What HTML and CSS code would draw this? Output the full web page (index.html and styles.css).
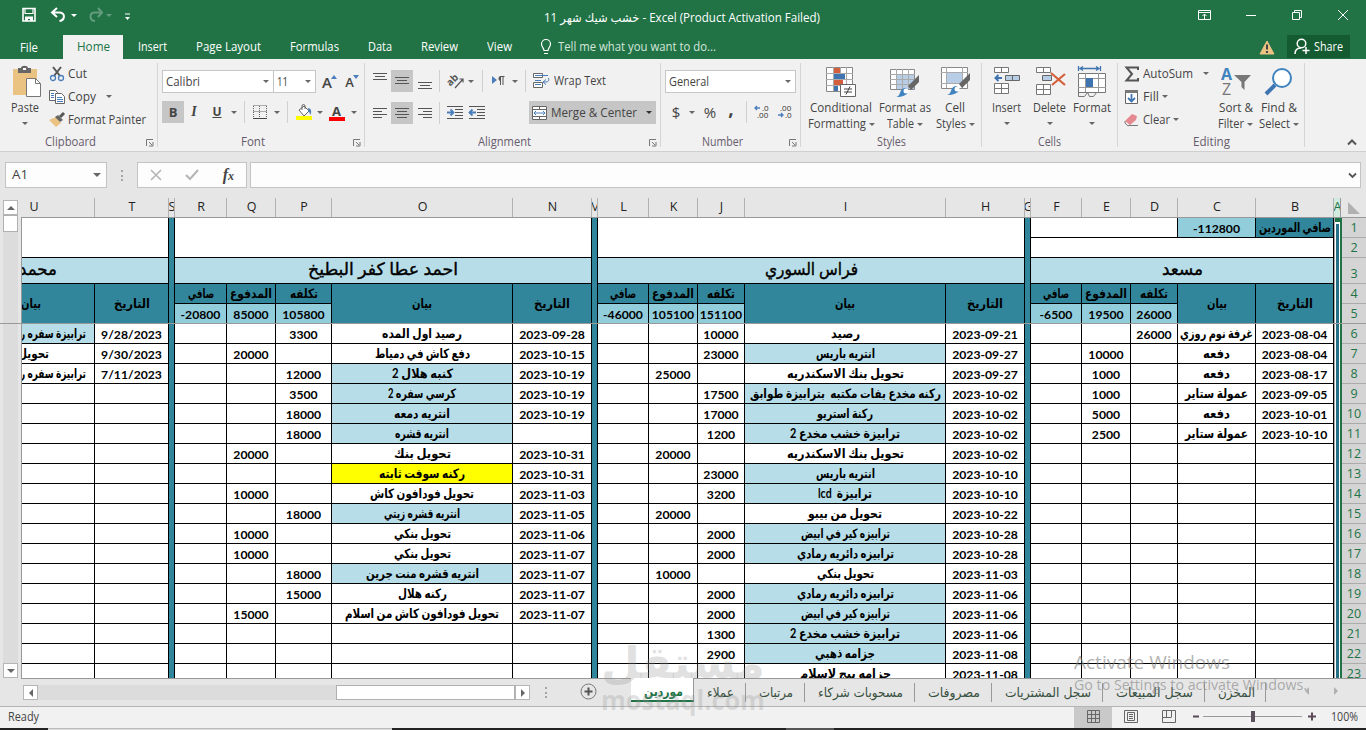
FILE: index.html
```html
<!DOCTYPE html>
<html lang="en">
<head>
<meta charset="utf-8">
<title>Excel</title>
<link rel="stylesheet" href="styles.css">
</head>
<body>
<div class="app">
  <header class="titlebar">
    <div class="qat">
      <svg width="16" height="16" viewBox="0 0 16 16"><path d="M2 1.500h12v12.500H2z" fill="none" stroke="#fff" stroke-width="1.600"/><path d="M4 1v5.500h8V1" fill="none" stroke="#fff" stroke-width="1.200"/><path d="M4 9.500h8V14H9v-2H7v2H4z" fill="#fff"/></svg>
      <svg width="18" height="16" viewBox="0 0 18 16"><path d="M7 1L2 5.500l5 4.500M2.500 5.500H9c7 0 6 7.500.500 8.500" fill="none" stroke="#fff" stroke-width="2"/></svg>
      <i class="arr w"></i>
      <svg class="dim" width="18" height="16" viewBox="0 0 18 16"><path d="M11 1l4 4.500-4 4.500M14.500 5.500H8c-6 0-6 7.500 0 8.500" fill="none" stroke="#fff" stroke-width="2"/></svg>
      <i class="arr w dim"></i>
      <svg width="7" height="8" viewBox="0 0 7 8"><path d="M1 1h5" stroke="#fff"/><path d="M1 4h5L3.500 7z" fill="#fff"/></svg>
    </div>
    <div class="doc"><span data-w="276"><bdi>خشب شيك شهر 11</bdi> - Excel (Product Activation Failed)</span></div>
    <div class="winbtns">
      <svg width="14" height="12" viewBox="0 0 14 12"><path d="M.5 1.500h12v9H.5zM.5 3.500h12M6.500 10V5M4.500 7l2-2 2 2" fill="none" stroke="#fff"/></svg>
      <svg width="12" height="12" viewBox="0 0 12 12"><path d="M1 6.500h10" stroke="#fff"/></svg>
      <svg width="12" height="12" viewBox="0 0 12 12"><path d="M1.500 3.500h7v7h-7zM3.500 3V1.500h7v7H9" fill="none" stroke="#fff"/></svg>
      <svg width="12" height="12" viewBox="0 0 12 12"><path d="M1 1l10 10M11 1L1 11" stroke="#fff"/></svg>
    </div>
  </header>
  <nav class="tabs">
    <span><b data-w="18">File</b></span><span class="on"><b data-w="33">Home</b></span><span><b data-w="29">Insert</b></span><span><b data-w="65">Page Layout</b></span><span><b data-w="49">Formulas</b></span><span><b data-w="24">Data</b></span><span><b data-w="37">Review</b></span><span><b data-w="25">View</b></span>
    <span class="tell"><svg width="12" height="16" viewBox="0 0 12 16"><path d="M4 11.500C4 9 1.500 8 1.500 5a4.500 4.500 0 0 1 9 0c0 3-2.500 4-2.500 6.500zM4 14.500h4" fill="none" stroke="#fff" stroke-width="1.200"/></svg><b data-w="158">Tell me what you want to do...</b></span>
    <svg class="warn" width="16" height="15" viewBox="0 0 16 15"><path d="M8 1l7 13H1z" fill="#eac282" stroke="#eac282" stroke-linejoin="round"/><path d="M8 4.500v5M8 11v2" stroke="#444" stroke-width="2"/></svg>
    <span class="share"><svg width="16" height="17" viewBox="0 0 16 17"><circle cx="7.500" cy="5.500" r="4.300" fill="none" stroke="#fff" stroke-width="1.500"/><path d="M1 16c0-4 2.500-6 6-6M12 9v7M8.500 12.500h7" fill="none" stroke="#fff" stroke-width="1.500"/></svg><b data-w="29">Share</b></span>
  </nav>

  <section class="ribbon">
    <div class="group clip">
      <div class="body">
        <div class="paste">
          <svg width="30" height="32" viewBox="0 0 30 32"><path d="M1 3h24v26H1z" fill="#eac282"/><path d="M6 2h3c0-3 7-3 7 0h3v5H6z" fill="#666"/><path d="M11 2h3v2h-3z" fill="#fff"/><path d="M14.500 12.500h9l5 5v13h-14z" fill="#fff" stroke="#777"/><path d="M23.500 12.500v5h5" fill="none" stroke="#777"/></svg>
          <span data-w="28">Paste</span><i class="arr"></i>
        </div>
        <div class="cliprows">
          <div><svg width="16" height="16" viewBox="0 0 16 16"><path d="M4 1l7 9M12 1L5 10" stroke="#555" stroke-width="2"/><circle cx="4" cy="12" r="2.500" fill="none" stroke="#4a7ebb" stroke-width="1.300"/><circle cx="12" cy="12" r="2.500" fill="none" stroke="#4a7ebb" stroke-width="1.300"/></svg><span data-w="19">Cut</span></div>
          <div><svg width="16" height="16" viewBox="0 0 16 16"><path d="M.5 1.500h6l2 2v8h-8z" fill="#fff" stroke="#666"/><path d="M6.500 4.500h6l3 3v7h-9z" fill="#fff" stroke="#666"/><path d="M2 4.500h3M2 6.500h3M2 8.500h3M8 8.500h5M8 10.500h6M8 12.500h6" stroke="#4a7ebb"/></svg><span data-w="28">Copy</span><i class="arr"></i></div>
          <div><svg width="16" height="16" viewBox="0 0 16 16"><path d="M0 8l7-3 5 6-5 4z" fill="#eac282"/><path d="M6 5l3-2 5 5-3 2z" fill="#666"/><path d="M11 5l4-4" stroke="#555" stroke-width="3"/></svg><span data-w="78">Format Painter</span></div>
        </div>
      </div>
      <div class="label"><span data-w="51">Clipboard</span><svg class="dl" width="8" height="8" viewBox="0 0 8 8"><path d="M.5 7V.5H7M3 3l3 3M7 3v4H3" fill="none" stroke="#777"/></svg></div>
    </div>

    <div class="group font">
      <div class="body two">
        <div class="r1"><span class="combo"><span data-w="34">Calibri</span><i class="arr"></i></span><span class="combo"><span data-w="11">11</span><i class="arr"></i></span><span class="bigA">A<svg width="6" height="4" viewBox="0 0 6 4"><path d="M0 4l3-4 3 4z" fill="#4a7ebb"/></svg></span><span class="smA">A<svg width="6" height="4" viewBox="0 0 6 4"><path d="M0 0h6L3 4z" fill="#4a7ebb"/></svg></span></div>
        <div class="r2"><b class="sel">B</b><em>I</em><u>U</u><i class="arr"></i><i class="sep"></i>
          <svg width="14" height="14" viewBox="0 0 14 14"><path d="M.5.5h13M.5 6.500h13M.5 1v12M6.500 1v12M13.500 1v12" stroke="#666" stroke-dasharray="1 1"/><path d="M0 13.500h14" stroke="#444"/></svg><i class="arr"></i><i class="sep"></i>
          <svg width="16" height="16" viewBox="0 0 16 16"><path d="M3 6l5-4 5 5-5 5z" fill="#fff" stroke="#666"/><path d="M6 6V2a1.500 1.500 0 0 1 3 0v3" fill="none" stroke="#666"/><path d="M12 4c3 0 4 3 2.500 7-1-3-2-3-2-4z" fill="#4a7ebb"/><path d="M0 12h16v4H0z" fill="#ff0"/></svg><i class="arr"></i>
          <span class="fcol">A</span><i class="arr"></i></div>
      </div>
      <div class="label"><span data-w="24">Font</span><svg class="dl" width="8" height="8" viewBox="0 0 8 8"><path d="M.5 7V.5H7M3 3l3 3M7 3v4H3" fill="none" stroke="#777"/></svg></div>
    </div>

    <div class="group align">
      <div class="body two">
        <div class="r1">
          <svg width="14" height="20" viewBox="0 0 14 20"><path d="M0 2.500h14M2 5.500h10M0 8.500h14" stroke="#555"/></svg>
          <span class="sel"><svg width="14" height="20" viewBox="0 0 14 20"><path d="M0 6.500h14M2 9.500h10M0 12.500h14" stroke="#555"/></svg></span>
          <svg width="14" height="20" viewBox="0 0 14 20"><path d="M0 11.500h14M2 14.500h10M0 17.500h14" stroke="#555"/></svg><i class="sep"></i>
          <svg width="18" height="16" viewBox="0 0 18 16"><text x="-1" y="10" transform="rotate(-45 5 8)" class="abtxt">ab</text><path d="M7 15L15 6M11.500 6H15v3.500" fill="none" stroke="#555" stroke-width="1.200"/></svg><i class="arr"></i><i class="sep"></i>
          <svg width="13" height="10" viewBox="0 0 13 10"><path d="M0 0l5 4-5 4z" fill="#4a7ebb"/><path d="M8.500 9V1M11 9V1M12.500.5H8" fill="none" stroke="#555"/><path d="M9 0a2.500 2.500 0 0 0 0 5z" fill="#555"/></svg><i class="arr"></i><i class="sep"></i>
          <svg width="17" height="16" viewBox="0 0 17 16"><path d="M.5.5h9v4h-9zM.5 9.500h9v5h-9z" fill="#fff" stroke="#666"/><path d="M2 2.500h13M2 7.500h6M2 11.500h6M15.500 5c1 4-1 4-5 4M13 6.500L10 9l3 2.500" fill="none" stroke="#4a7ebb"/></svg>
          <span class="t"><span data-w="52">Wrap Text</span></span>
        </div>
        <div class="r2">
          <svg width="14" height="12" viewBox="0 0 14 12"><path d="M0 1.500h14M0 4.500h9M0 7.500h14M0 10.500h9" stroke="#555"/></svg>
          <span class="sel"><svg width="14" height="12" viewBox="0 0 14 12"><path d="M0 1.500h14M2 4.500h10M0 7.500h14M2 10.500h10" stroke="#555"/></svg></span>
          <svg width="14" height="12" viewBox="0 0 14 12"><path d="M0 1.500h14M5 4.500h9M0 7.500h14M5 10.500h9" stroke="#555"/></svg><i class="sep"></i>
          <svg width="16" height="13" viewBox="0 0 16 13"><path d="M0 .5h16M8 3.500h8M8 6.500h8M8 9.500h8M0 12.500h16" stroke="#555"/><path d="M0 6.500h6M3.500 3.500l3 3-3 3" fill="none" stroke="#4a7ebb" stroke-width="1.800"/></svg>
          <svg width="16" height="13" viewBox="0 0 16 13"><path d="M0 .5h16M8 3.500h8M8 6.500h8M8 9.500h8M0 12.500h16" stroke="#555"/><path d="M1 6.500h6M3.500 3.500l-3 3 3 3" fill="none" stroke="#4a7ebb" stroke-width="1.800"/></svg>
          <span class="merge"><svg width="15" height="14" viewBox="0 0 15 14"><path d="M.5.5h14v13H.5zM.5 3.500h14M.5 10.500h14M7.500 0v3.500M7.500 10.500V14" fill="#fff" stroke="#666"/><path d="M2 7h11M4 5L2 7l2 2M11 5l2 2-2 2" fill="none" stroke="#4a7ebb"/></svg><span data-w="86">Merge &amp; Center</span><i class="arr"></i></span>
        </div>
      </div>
      <div class="label"><span data-w="53">Alignment</span><svg class="dl" width="8" height="8" viewBox="0 0 8 8"><path d="M.5 7V.5H7M3 3l3 3M7 3v4H3" fill="none" stroke="#777"/></svg></div>
    </div>

    <div class="group number">
      <div class="body two">
        <div class="r1"><span class="combo"><span data-w="40">General</span><i class="arr"></i></span></div>
        <div class="r2"><span class="sym">$</span><i class="arr"></i><span class="sym">%</span><span class="comma">,</span><i class="sep"></i>
          <svg width="16" height="16" viewBox="0 0 16 16"><text x="8" y="7" class="dec">.0</text><text x="3" y="14" class="dec">.00</text><path d="M1 4h5M3 2L1 4l2 2" fill="none" stroke="#4a7ebb" stroke-width="1.300"/></svg>
          <svg width="16" height="16" viewBox="0 0 16 16"><text x="3" y="7" class="dec">.00</text><text x="8" y="14" class="dec">.0</text><path d="M1 11h5M4 9l2 2-2 2" fill="none" stroke="#4a7ebb" stroke-width="1.300"/></svg></div>
      </div>
      <div class="label"><span data-w="41">Number</span><svg class="dl" width="8" height="8" viewBox="0 0 8 8"><path d="M.5 7V.5H7M3 3l3 3M7 3v4H3" fill="none" stroke="#777"/></svg></div>
    </div>

    <div class="group styles">
      <div class="body bigs">
        <div class="big"><svg width="32" height="32" viewBox="0 0 32 32"><path d="M1.500 1.500h26v24h-26z" fill="#fff" stroke="#888"/><path d="M8.500 1v24M15.500 1v24M21.500 1v24M1 7.500h27M1 13.500h27M1 19.500h27" stroke="#aaa"/><path d="M9 2h6v5H9zM9 14h9v5H9z" fill="#d35f3c"/><path d="M9 8h11v5H9zM9 20h4v5H9z" fill="#3f74b1"/><path d="M15.500 18.500h15v12h-15z" fill="#fff" stroke="#666"/><path d="M19 23h8M19 26h8M25 20.500l-4 8" stroke="#444"/></svg><span data-w="62">Conditional</span><div><span data-w="58">Formatting</span><i class="arr"></i></div></div>
        <div class="big"><svg width="32" height="32" viewBox="0 0 32 32"><path d="M1.500 3.500h24v20h-24z" fill="#fff" stroke="#888"/><path d="M8 9h17v14H8z" fill="#b8cde6"/><path d="M7.500 3v20M13.500 3v20M19.500 3v20M1 8.500h25M1 13.500h25M1 18.500h25" stroke="#aaa"/><path d="M19 20l11-11v7l-8 8z" fill="#666"/><path d="M7 31c5 0 3-9 9-9 5 1 5 9-9 9z" fill="#3f83bf"/><circle cx="17" cy="25" r="2.500" fill="#fff"/></svg><span data-w="52">Format as</span><div><span data-w="27">Table</span><i class="arr"></i></div></div>
        <div class="big"><svg width="32" height="32" viewBox="0 0 32 32"><path d="M2.500 1.500h26v21h-26z" fill="#fff" stroke="#888"/><path d="M7.500 1v21M23.500 1v21M2 6.500h27M2 17.500h27" stroke="#aaa"/><path d="M8 7h15v10H8z" fill="#b8cde6"/><path d="M20 18l11-11v7l-8 8z" fill="#666"/><path d="M8 29c5 0 3-9 9-9 5 1 5 9-9 9z" fill="#3f83bf"/><circle cx="18" cy="23" r="2.500" fill="#fff"/></svg><span data-w="20">Cell</span><div><span data-w="30">Styles</span><i class="arr"></i></div></div>
      </div>
      <div class="label"><span data-w="29">Styles</span></div>
    </div>

    <div class="group cells">
      <div class="body bigs">
        <div class="big"><svg width="30" height="32" viewBox="0 0 30 32"><path d="M2.500 1.500h14v5h-14zM2.500 17.500h14v10h-14zM9.500 1.500v5M9.500 17.500v10M2.500 22.500h14" fill="#fff" stroke="#777"/><path d="M13.500 9.500h14v5h-14zM20.500 9.500v5" fill="#b8cde6" stroke="#666"/><path d="M4 12h6M6.500 9L3.500 12l3 3" fill="none" stroke="#3f74b1" stroke-width="2"/></svg><span data-w="29">Insert</span><i class="arr"></i></div>
        <div class="big"><svg width="30" height="32" viewBox="0 0 30 32"><path d="M1.500 1.500h14v5h-14zM1.500 18.500h14v10h-14zM8.500 1.500v5M8.500 18.500v10M1.500 23.500h14" fill="#fff" stroke="#777"/><path d="M7.500 9.500h9v5h-9z" fill="#b8cde6" stroke="#666"/><path d="M16 7l14 12M30 8L17 19" stroke="#d35f3c" stroke-width="2.200"/></svg><span data-w="33">Delete</span><i class="arr"></i></div>
        <div class="big"><svg width="30" height="32" viewBox="0 0 30 32"><path d="M1.500 7.500h27v19h-27z" fill="#fff" stroke="#777"/><path d="M8.500 7v19M21.500 7v19M1 12.500h28M1 21.500h28" stroke="#999"/><path d="M9 12h7v9H9z" fill="#3f74b1"/><path d="M1.500 0v5M23.500 0v5M3 2.500h19M6 .5l-3 2 3 2M19 .5l3 2-3 2" fill="none" stroke="#3f74b1" stroke-width="1.300"/><path d="M1.500 26v4.500h6l3-4 2 4h4l3-4" fill="none" stroke="#777"/></svg><span data-w="38">Format</span><i class="arr"></i></div>
      </div>
      <div class="label"><span data-w="23">Cells</span></div>
    </div>

    <div class="group edit">
      <div class="body">
        <div class="editrows">
          <div><svg width="16" height="16" viewBox="0 0 16 16"><path d="M14 4V1.500H2.500L8 8l-5.500 6.500H14V12" fill="none" stroke="#555" stroke-width="2"/></svg><span data-w="50">AutoSum</span><i class="arr far"></i></div>
          <div><svg width="16" height="16" viewBox="0 0 16 16"><path d="M1.500 1.500h12v13h-12z" fill="#fff" stroke="#666"/><path d="M1 1h13v3H1z" fill="#777"/><path d="M7.500 5v7M4 9l3.500 3.500L11 9" fill="none" stroke="#3f74b1" stroke-width="1.800"/></svg><span data-w="16">Fill</span><i class="arr"></i></div>
          <div><svg width="16" height="16" viewBox="0 0 16 16"><path d="M1 9l7-7 5 2-1 4-6 5z" fill="#e68a92"/><path d="M1 9v2l3 3 2-1M5 13.500h9" fill="none" stroke="#777"/></svg><span data-w="27">Clear</span><i class="arr"></i></div>
        </div>
        <div class="big"><svg width="30" height="30" viewBox="0 0 30 30"><text x="0" y="13" class="azA">A</text><text x="1" y="28" class="azZ">Z</text><path d="M13 8h17l-6.500 7v8l-3-3v-5z" fill="#777"/></svg><span data-w="34">Sort &amp;</span><div><span data-w="26">Filter</span><i class="arr"></i></div></div>
        <div class="big"><svg width="30" height="30" viewBox="0 0 30 30"><path d="M2 27l9-9" stroke="#3f74b1" stroke-width="4"/><circle cx="18" cy="11" r="9" fill="#fff" stroke="#3f83bf" stroke-width="2"/></svg><span data-w="36">Find &amp;</span><div><span data-w="31">Select</span><i class="arr"></i></div></div>
      </div>
      <div class="label"><span data-w="37">Editing</span></div>
    </div>
    <svg class="collapse" width="10" height="7" viewBox="0 0 10 7"><path d="M1 5.500L5 1.500l4 4" fill="none" stroke="#555" stroke-width="2"/></svg>
  </section>

  <section class="fbar">
    <div class="namebox"><span data-w="16">A1</span><i class="arr wide"></i></div>
    <i class="dots"></i>
    <div class="fx">
      <svg width="12" height="12" viewBox="0 0 12 12"><path d="M1 1l10 10M11 1L1 11" stroke="#b5b5b5" stroke-width="1.600"/></svg>
      <svg width="14" height="12" viewBox="0 0 14 12"><path d="M1 6l4 4 8-9" fill="none" stroke="#b5b5b5" stroke-width="2"/></svg>
      <span>f<small>x</small></span>
    </div>
    <div class="formula"><svg width="9" height="7" viewBox="0 0 9 7"><path d="M1 1.500l3.500 3.500L8 1.500" fill="none" stroke="#555" stroke-width="1.800"/></svg></div>
  </section>

  <main class="work">
    <div class="vscroll"><span class="sb"><i class="arr up"></i></span><span class="thumb"></span><span class="track"></span><span class="sb"><i class="arr wide"></i></span></div>
    <div class="sheet">
      <div class="colhead" id="colhead"></div>
      <div class="lower"><div class="grid" id="grid"></div><div class="colA"><i></i></div><div class="rowhead" id="rowhead"></div></div>
    </div>
    <div class="freeze"></div>
  </main>

  <section class="bottom">
    <div class="hscroll"><span class="sb"><i class="arr left"></i></span><span class="track"></span><span class="thumb"></span><span class="sb"><i class="arr right"></i></span></div>
    <i class="dots"></i>
    <svg class="add" width="17" height="17" viewBox="0 0 17 17"><circle cx="8.500" cy="8.500" r="7.500" fill="none" stroke="#777"/><path d="M8.500 4.500v8M4.500 8.500h8" stroke="#555" stroke-width="2"/></svg>
    <div class="stabs"><span class="on"><b data-w="39">موردين</b></span><span><b data-w="27">عملاء</b></span><span><b data-w="34">مرتبات</b></span><span><b data-w="85">مسحوبات شركاء</b></span><span><b data-w="52">مصروفات</b></span><span><b data-w="86">سجل المشتريات</b></span><span><b data-w="77">سجل المبيعات</b></span><span><b data-w="37">المخزن</b></span></div>
    <i class="nav left"></i><i class="nav right"></i>
  </section>

  <footer class="status">
    <span class="ready"><span data-w="31">Ready</span></span>
    <span class="view on"><svg width="13" height="13" viewBox="0 0 13 13"><path d="M.5.5h12v12H.5zM4.500 0v13M8.500 0v13M0 4.500h13M0 8.500h13" fill="none" stroke="#666"/></svg></span>
    <span class="view"><svg width="14" height="13" viewBox="0 0 14 13"><path d="M.5.5h13v12H.5zM3.500 2.500h7v8h-7zM5 4.500h4M5 6.500h4M5 8.500h4" fill="none" stroke="#666"/></svg></span>
    <span class="view"><svg width="14" height="13" viewBox="0 0 14 13"><path d="M.5.5h13v12H.5zM4.500 0v7M9.500 0v7M.5 7.500h9" fill="none" stroke="#666"/></svg></span>
    <span class="zoom"><svg width="126" height="13" viewBox="0 0 126 13"><path d="M2 6.500h6M117 6.500h8M121 2.500v8" stroke="#5a4a5a" stroke-width="2"/><path d="M12 6.500h99" stroke="#999"/><path d="M60 1h4v11h-4z" fill="#5a4f5c"/></svg></span>
    <span class="pct"><span data-w="27">100%</span></span>
  </footer>
  <div class="strip"><i></i><i></i></div>

  <div class="activate"><div><span data-w="156">Activate Windows</span></div><p><span data-w="233">Go to Settings to activate Windows.</span></p></div>
  <div class="mark"><div><span data-w="164">مستقل</span></div><p><span data-w="164">mostaql.com</span></p></div>
</div>
<script src="app.js"></script>
</body>
</html>
```

FILE: styles.css
```css
* { box-sizing: border-box; }
body { margin: 0; font: 12px/16px "Open Sans", "Noto Sans", "DejaVu Sans", sans-serif; color: #444; }
b { font-weight: 400; }
svg { display: block; flex: none; overflow: visible; }
[data-w] { display: inline-block; white-space: nowrap; transform-origin: 0 50%; flex: none; }
.app { position: relative; width: 1366px; height: 730px; overflow: hidden; background: #e6e6e6; display: flex; flex-direction: column; }
.app > * { flex: none; }

.arr { display: inline-block; flex: none; width: 0; height: 0; border-style: solid; border-width: 3px 3px 0; border-color: #666 transparent transparent; }
.arr.w { border-top-color: #fff; }
.arr.wide { border-width: 4px 4px 0; }
.arr.up { border-width: 0 4px 4px; border-color: transparent transparent #666; }
.arr.left { border-width: 4px 4px 4px 0; border-color: transparent #666 transparent transparent; }
.arr.right { border-width: 4px 0 4px 4px; border-color: transparent transparent transparent #666; }
.dim { opacity: .3; }
.sep { width: 1px; height: 22px; background: #d0d0d0; }
.sel { background: #c6c6c6; }

.titlebar { height: 35px; background: #217346; color: #fff; display: grid; grid-template-columns: 364px 636px 366px; }
.qat { display: grid; grid-template-columns: 16px 18px 6px 18px 6px 7px; padding: 7px 0 0 21px; align-items: start; }
.qat > :nth-child(2) { margin-left: 13px; }
.qat > :nth-child(3) { margin: 7px 0 0 16px; }
.qat > :nth-child(4) { margin-left: 26px; }
.qat > :nth-child(5) { margin: 7px 0 0 27px; }
.qat > :nth-child(6) { margin: 6px 0 0 39px; }
.doc { text-align: center; padding-top: 10px; }
.winbtns { display: grid; grid-template-columns: 46px 46px 46px 46px; margin: 9px 0 0 182px; justify-items: center; height: 12px; }

.tabs { height: 24px; background: #217346; color: #fff; display: grid; grid-template-columns: 63px 60px 59px 93px 79px 52px 66px 54px 193px 520px 1fr; position: relative; }
.tabs > span { display: flex; align-items: center; justify-content: center; font-size: 12px; }
.tabs > span:first-child { padding: 2px 5px 0 0; }
.tabs > .on { background: #f1f1f1; color: #217346; }
.tabs > .tell { justify-content: flex-start; gap: 6px; padding-left: 14px; color: #d5e6dc; white-space: nowrap; }
.tabs > .warn { margin: 5px 0 0 540px; grid-column: 10; }
.tabs > .share { position: absolute; left: 1287px; top: 0; width: 63px; height: 23px; background: #155b32; gap: 4px; }

.ribbon { height: 93px; background: #f1f1f1; border-bottom: 1px solid #cfcfcf; display: grid; grid-template-columns: 158px 207px 296px 140px 181px 136px 187px 1fr; }
.group { display: flex; flex-direction: column; border-right: 1px solid #d5d5d5; margin: 4px 0 4px; height: 84px; position: relative; }
.body { height: 73px; display: flex; }
.label { height: 12px; display: flex; justify-content: center; align-items: center; color: #665b6b; padding: 2px 16px 0 0; position: relative; }
.styles .label, .cells .label, .edit .label { padding-right: 0; }
.dl { position: absolute; right: 3px; top: 4px; }
.collapse { align-self: end; margin: 0 0 5px 42px; }
.paste { width: 50px; display: flex; flex-direction: column; align-items: center; padding-top: 3px; }
.paste svg { margin: 0 0 2px 4px; }
.paste .arr { margin-top: 6px; }
.cliprows { display: grid; grid-template-rows: 21px 25px 21px; }
.cliprows > div, .editrows > div { display: flex; align-items: center; gap: 2px; }
.cliprows > div { margin-left: -1px; gap: 3px; }
.cliprows .arr { margin-left: 7px; }
.two { flex-direction: column; padding: 7px 0 0 4px; gap: 9px; }
.r1, .r2 { height: 22px; display: grid; place-items: center; align-items: center; }
.font .r1 { grid-template-columns: 112px 42px 27px 18px; }
.font .r2 { grid-template-columns: 22px 20px 26px 7px 15px 16px 17px 5px 27px 5px 29px 6px; font-size: 14px; }
.font .sel, .align .sel { width: 22px; height: 22px; display: flex; align-items: center; justify-content: center; font-weight: 700; font-size: 13px; }
.font em { font-family: "Liberation Serif", serif; font-weight: 700; font-size: 14px; }
.font u { font-weight: 700; font-size: 12px; }
.combo { width: 100%; height: 23px; background: #fff; border: 1px solid #c6c6c6; display: flex; align-items: center; justify-content: space-between; padding: 0 4px 0 3px; }
.font .combo + .combo { border-left: 0; }
.bigA, .smA { display: flex; align-items: flex-start; font-size: 15px; font-weight: 600; line-height: 22px; }
.smA { font-size: 13px; }
.bigA svg, .smA svg { margin: 4px 0 0 -1px; }
.fcol { font-weight: 700; font-size: 13px; line-height: 15px; border-bottom: 4px solid #f00; width: 16px; height: 17px; text-align: center; }
.align .two { padding-left: 3px; }
.align .r1 { grid-template-columns: 23px 22px 23px 7px 27px 2px 20px 13px 19px 3px 29px 60px; }
.align .r2 { grid-template-columns: 23px 22px 23px 7px 24px 20px 42px; }
.align .t { justify-self: start; margin-left: -2px; }
.abtxt { font: 700 10px "Open Sans", sans-serif; fill: #555; }
.merge { justify-self: start; margin-left: 42px; width: 127px; height: 23px; background: #c6c6c6; display: flex; align-items: center; gap: 4px; padding-left: 3px; }
.merge .arr { margin-left: 5px; border-top-color: #333; }
.number .r1 { grid-template-columns: 131px; }
.number .r2 { grid-template-columns: 22px 10px 26px 16px 14px 18px 27px; }
.sym { font-size: 15px; }
.comma { font-size: 19px; font-weight: 700; line-height: 0; height: 8px; }
.dec { font: 8px "Open Sans", sans-serif; fill: #333; }
.bigs { display: grid; }
.big { display: flex; flex-direction: column; align-items: center; white-space: nowrap; padding-top: 3px; }
.big svg { height: 32px; margin-bottom: 2px; }
.big > div { display: flex; align-items: center; gap: 3px; }
.big > .arr { margin-top: 6px; }
.styles .bigs { grid-template-columns: 80px 48px 52px; }
.cells .bigs { grid-template-columns: 49px 37px 48px; }
.editrows { width: 99px; padding-left: 6px; display: grid; grid-template-rows: 21px 25px 21px; }
.edit .big { width: 43px; flex: none; }
.edit .big:nth-child(2) { margin-left: -3px; }
.editrows > div { gap: 3px; }
.edit .far { margin-left: 7px; }
.azA { font: 700 16px "Open Sans", sans-serif; fill: #3f83bf; }
.azZ { font: 16px "Open Sans", sans-serif; fill: #777; }

.fbar { height: 46px; padding: 10px 0 0 5px; display: grid; grid-template-columns: 102px 30px 110px 1114px; align-items: start; }
.namebox, .fx, .formula { height: 26px; background: #fdfdfd; border: 1px solid #c3c3c3; display: flex; align-items: center; justify-content: space-between; padding: 0 5px 0 6px; }
.dots { width: 2px; height: 11px; background: repeating-linear-gradient(#a5a5a5 0 2px, transparent 2px 4.500px); margin: 8px 0 0 14px; }
.fx { padding: 0 12px 0 12px; }
.fx span { font: italic 700 16px "Liberation Serif", serif; }
.fx small { font-size: 12px; }
.formula { margin-left: 3px; justify-content: flex-end; padding-right: 3px; }

.work { position: relative; height: 480px; display: flex; padding-left: 3px; }
.vscroll { width: 15px; margin-top: 2px; display: flex; flex-direction: column; }
.sb { width: 15px; height: 15px; background: #fff; border: 1px solid #b5b5b5; display: flex; align-items: center; justify-content: center; flex: none; }
.thumb { background: #fff; border: 1px solid #b0b0b0; }
.vscroll .thumb { height: 17px; }
.track { flex: 1; background: #dcdcdc; }
.sheet { margin-left: 3px; width: 1345px; border-left: 1px solid #999; height: 481px; display: flex; flex-direction: column; }
.colhead { height: 20px; display: flex; background: #e6e6e6; border-bottom: 1px solid #999; margin-left: -1px; padding-left: 1px; color: #222; }
.colhead span { border-right: 1px solid #b1b1b1; display: flex; justify-content: center; align-items: center; overflow: hidden; font-size: 12.500px; flex: none; padding: 0 0 2px 1px; }
.colhead .first { padding-right: 49px; }
.colhead .a { width: 7px; background: #d3eadf; color: #217346; border-right-color: #999; }
.colhead .corner { border: 0; width: 25px; padding-top: 2px; }
.lower { display: flex; height: 461px; border-bottom: 1px solid #999; overflow: hidden; }
.grid { display: grid; flex: none; grid-template-rows: 20px 20px 26px 20px 20px repeat(17, 20px) 20px; background: #fff; color: #000; }
.c { border-right: 1px solid #000; border-bottom: 1px solid #000; overflow: hidden; display: flex; align-items: center; justify-content: center; font: 700 12.200px/19px Lato, "DejaVu Sans", sans-serif; white-space: nowrap; padding-top: 1px; }
.c.ar { font-size: 13px; padding-top: 0; }
.c.title { background: #b7dee8; font-size: 17px; font-weight: 400; -webkit-text-stroke: .4px #000; line-height: 22px; padding-bottom: 3px; }
.c.dark { background: #31869b; }
.c.ar.dark { padding-bottom: 1px; }
.c.mid { background: #92cddc; }
.c.light { background: #b7dee8; }
.c.yellow { background: #ff0; }
.c.gap { background: #31869b; border-bottom: 0; }
.c.cut { justify-content: flex-end; }
.c.p111 { padding-right: 111px; } .c.p8 { padding-right: 8px; } .c.p45 { padding-right: 45px; } .c.p53 { padding-right: 53px; }
.colA { width: 8px; flex: none; background: #fff; border-left: 1px solid #aaa; border-right: 2px solid #217346; padding: 6px 0 0 1px; position: relative; }
.colA::before { content: ""; position: absolute; left: 0; top: 0; width: 6px; height: 4px; background: #217346; }
.colA i { display: block; width: 3px; height: 100%; background: #276f84; }
.rowhead { width: 24px; background: #d4d4d4; color: #217346; }
.rowhead span { height: 20px; border-bottom: 1px solid #ababab; display: flex; align-items: flex-end; justify-content: center; font-size: 12.500px; line-height: 18px; }
.rowhead span:nth-child(3) { height: 26px; }
.freeze { position: absolute; left: 0; top: 125px; width: 1366px; height: 1px; background: #999; }

.bottom { height: 29px; border-bottom: 1px solid #b5b5b5; display: flex; padding-left: 23px; position: relative; }
.hscroll { display: flex; width: 507px; height: 15px; margin-top: 7px; }
.hscroll .track { flex: none; width: 298px; }
.hscroll .thumb { flex: 1; }
.bottom .dots { margin: 9px 0 0 15px; }
.add { margin: 5px 0 0 33px; }
.stabs { display: grid; grid-template-columns: 63px 52px 59px 110px 77px 111px 102px 61px; margin-left: 34px; height: 28px; }
.stabs span { display: flex; align-items: center; justify-content: center; border-right: 1px solid #999; height: 19px; margin-top: 5px; font: 13px "DejaVu Sans", sans-serif; color: #385040; padding-left: 2px; }
.stabs .on { height: 24px; margin-top: 0; padding-top: 4px; background: #fff; border-bottom: 2px solid #217346; color: #217346; }
.stabs .on b { font-weight: 700; }
.nav { border: 4px solid transparent; width: 0; height: 0; margin: 9px 0 0 39px; }
.nav.left { border-right-color: #b0b0b0; border-left: 0; }
.nav.right { border-left-color: #b0b0b0; border-right: 0; margin-left: 25px; }

.status { height: 21px; background: #f1f1f1; display: grid; grid-template-columns: 1074px 38px 38px 38px 132px 46px; align-items: center; }
.ready, .pct { padding: 0 0 2px 8px; }
.view { height: 21px; display: flex; align-items: center; justify-content: center; padding-bottom: 2px; }
.view.on { background: #c9c9c9; }
.zoom { padding: 0 0 2px 3px; }
.pct { padding-left: 11px; }
.strip { height: 2px; background: #222; display: flex; }
.strip i { width: 344px; height: 2px; margin-left: 48px; background: #ddd; border-top: 1px solid #bbb; }
.strip i + i { width: 48px; margin-left: 394px; background: #555; border: 0; }

.activate { position: absolute; left: 1074px; top: 650px; color: rgba(130, 130, 130, .62); font-size: 18px; line-height: 24px; }
.activate p { margin: 0; font-size: 14px; line-height: 21px; }
.mark { position: absolute; left: 601px; top: 634px; width: 164px; height: 84px; color: rgba(150, 150, 150, .28); font: 700 44px/58px "DejaVu Sans", sans-serif; }
.mark div { height: 50px; }
.mark p { margin: 0; font: 700 26px/32px "Open Sans", sans-serif; }
```

FILE: app.js
```js
const cols = [['U',73],['T',74],['S',6],['R',52],['Q',49],['P',56],['O',181],['N',79],['M',6],['L',51],['K',49],['J',47],['I',201],['H',79],['G',6],['F',51],['E',49],['D',47],['C',78],['B',78]];
const grid = document.getElementById('grid');
const at = l => cols.findIndex(c => c[0] === l) + 1;
grid.style.gridTemplateColumns = cols.map(c => c[1] + 'px').join(' ');
const used = {};

// Adds one cell; rs and cs are its row and column spans, w the drawn width of its text.
function put(l, r, text, cls = '', w = 0, rs = 1, cs = 1) {
  const d = document.createElement('div');
  d.className = 'c ' + cls + (/[\u0600-\u06ff]/.test(text) ? ' ar' : '');
  d.style.gridArea = `${r} / ${at(l)} / span ${rs} / span ${cs}`;
  if (text) {
    const s = document.createElement('span');
    s.textContent = text;
    if (/[\u0600-\u06ff]/.test(text)) s.dir = 'rtl';
    if (w) s.dataset.w = w;
    s.style.whiteSpace = 'pre';
    d.append(s);
  }
  grid.append(d);
  for (let i = 0; i < rs; i++) for (let j = 0; j < cs; j++) used[(r + i) + ',' + (at(l) + j)] = 1;
}

['S','M','G'].forEach(l => put(l, 1, '', 'gap', 0, 23));
put('U', 1, '', '', 0, 2, 2); put('R', 1, '', '', 0, 2, 5); put('L', 1, '', '', 0, 2, 5);
put('F', 1, '', '', 0, 1, 3); put('C', 1, '-112800', 'mid'); put('B', 1, 'صافي الموردين', 'dark', 72);
put('F', 2, '', '', 0, 1, 5);
put('U', 3, 'محمد', 'title cut p111', 38, 1, 2);
put('R', 3, 'احمد عطا كفر البطيخ', 'title', 150, 1, 5);
put('L', 3, 'فراس السوري', 'title', 93, 1, 5);
put('F', 3, 'مسعد', 'title', 41, 1, 5);
[['R','Q','P','O','N','-20800','85000','105800'],['L','K','J','I','H','-46000','105100','151100'],['F','E','D','C','B','-6500','19500','26000']].forEach(g => {
  put(g[0], 4, 'صافي', 'dark', 26); put(g[1], 4, 'المدفوع', 'dark', 42); put(g[2], 4, 'تكلفه', 'dark', 28);
  for (let i = 0; i < 3; i++) put(g[i], 5, g[5 + i], 'mid');
  put(g[3], 4, 'بيان', 'dark', 20, 2); put(g[4], 4, 'التاريخ', 'dark', 36, 2);
});
put('U', 4, 'بيان', 'dark cut p53', 20, 2); put('T', 4, 'التاريخ', 'dark', 36, 2);
put('U', 6, 'ترابيزة سفره ر', 'light cut p8', 66); put('U', 7, 'تحويل', 'cut p45', 31); put('U', 8, 'ترابيزة سفره ر', 'cut p8', 66);
['9/28/2023','9/30/2023','7/11/2023'].forEach((t, i) => put('T', 6 + i, t));

const fill = { l: 'light', y: 'yellow', '': '' };
// Row entries: text, text width, fill, paid, cost, date.
function block(names, rows) {
  rows.forEach((r, i) => {
    put(names[0], 6 + i, r[0], fill[r[2]], r[1]);
    if (r[3]) put(names[1], 6 + i, String(r[3]));
    if (r[4]) put(names[2], 6 + i, String(r[4]));
    if (r[5]) put(names[3], 6 + i, '2023-' + r[5]);
  });
}
block(['O','Q','P','N'], [
  ['رصيد اول المده',80,'',0,3300,'09-28'],['دفع كاش في دمياط',95,'',20000,0,'10-15'],['كنبه هلال 2',61,'l',0,12000,'10-19'],
  ['كرسي سفره 2',68,'l',0,3500,'10-19'],['انتريه دمعه',56,'l',0,18000,'10-19'],['انتريه قشره',54,'l',0,18000,''],
  ['تحويل بنك',57,'',20000,0,'10-31'],['ركنه سوفت ثابته',86,'y',0,0,'10-31'],['تحويل فودافون كاش',104,'',10000,0,'11-03'],
  ['انتريه قشره زيتي',76,'l',0,18000,'11-05'],['تحويل بنكي',57,'',10000,0,'11-06'],['تحويل بنكي',57,'',10000,0,'11-07'],
  ['انتريه قشره منت جرين',113,'l',0,18000,'11-07'],['ركنه هلال',49,'',0,15000,'11-07'],['تحويل فودافون كاش من اسلام',154,'',15000,0,'11-07']]);
block(['I','K','J','H'], [
  ['رصيد',29,'',0,10000,'09-21'],['انتريه باريس',59,'l',0,23000,'09-27'],['تحويل بنك الاسكندريه',117,'',25000,0,'09-27'],
  ['ركنه مخدع بفات مكتبه  بترابيزة طوابق',191,'l',0,17500,'10-02'],['ركنة استريو',56,'l',0,17000,'10-02'],['ترابيزة خشب مخدع 2',110,'l',0,1200,'10-02'],
  ['تحويل بنك الاسكندريه',117,'',20000,0,'10-02'],['انتريه باريس',59,'l',0,23000,'10-10'],['ترابيزة  lcd',54,'l',0,3200,'10-10'],
  ['تحويل من بيبو',74,'',20000,0,'10-22'],['ترابيزه كير في ابيض',89,'l',0,2000,'10-28'],['ترابيزه دائريه رمادي',97,'l',0,2000,'10-28'],
  ['تحويل بنكي',57,'',10000,0,'11-03'],['ترابيزه دائريه رمادي',97,'l',0,2000,'11-06'],['ترابيزه كير في ابيض',89,'l',0,2000,'11-06'],
  ['ترابيزة خشب مخدع 2',110,'l',0,1300,'11-06'],['جزامه ذهبي',60,'l',0,2900,'11-08'],['جزامه بيج لاسلام',91,'',0,0,'11-08']]);
block(['C','E','D','B'], [
  ['غرفة نوم روزي',73,'',0,26000,'08-04'],['دفعه',27,'',10000,0,'08-04'],['دفعه',27,'',1000,0,'08-17'],
  ['عمولة ستاير',63,'',1000,0,'09-05'],['دفعه',27,'',5000,0,'10-01'],['عمولة ستاير',63,'',2500,0,'10-10']]);
for (let r = 6; r <= 23; r++) cols.forEach((c, i) => { if (!used[r + ',' + (i + 1)]) put(c[0], r, ''); });

document.getElementById('colhead').innerHTML = cols.map((c, i) => `<span ${i ? '' : 'class="first" '}style="width:${c[1]}px"><b>${c[0]}</b></span>`).join('') +
  '<span class="a"><b>A</b></span><span class="corner"><svg width="12" height="12" viewBox="0 0 12 12"><path d="M0 0v12h12z" fill="#b1b1b1"/></svg></span>';
document.getElementById('rowhead').innerHTML = Array.from({ length: 23 }, (_, i) => `<span>${i + 1}</span>`).join('');

// Condenses or widens a label so that it takes the given width.
document.querySelectorAll('[data-w]').forEach(e => {
  const n = e.getBoundingClientRect().width, w = +e.dataset.w;
  e.style.transform = `scaleX(${w / n})`;
  e.style.marginRight = (w - n) + 'px';
});
```
